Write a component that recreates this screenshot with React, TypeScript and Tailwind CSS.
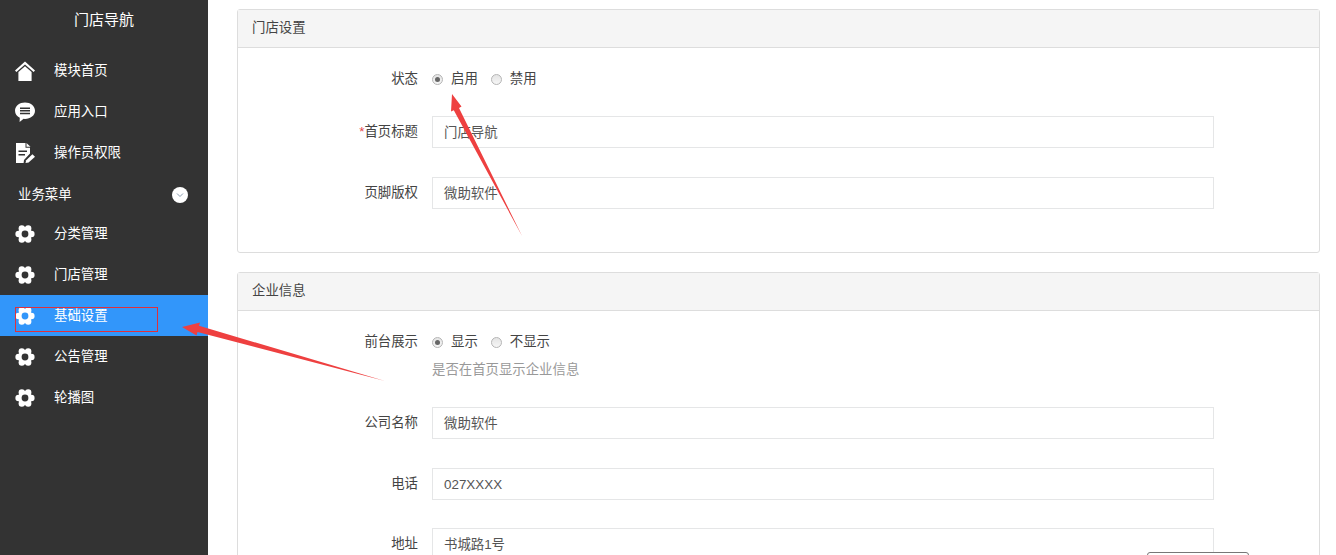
import type { ReactNode } from "react";

const FONT = "font-['Liberation_Sans','Noto_Sans_CJK_SC',sans-serif]";

function HomeIcon() {
  return (
    <svg viewBox="0 0 20 20" className="h-5 w-5 fill-white">
      <path d="M10 0.5 L20 9.5 L18.6 11 L10 3.4 L1.4 11 L0 9.5 Z" />
      <path d="M10 5.2 L16.6 11 V20 H3.4 V11 Z" />
    </svg>
  );
}

function ChatIcon() {
  return (
    <svg viewBox="0 0 20 20" className="h-5 w-5">
      <path
        className="fill-white"
        d="M10 0.5 C15.5 0.5 20 4 20 8.7 C20 13.4 15.5 16.9 10 16.9 L8.6 16.8 L4.6 20 L4.8 15.7 C2 14.3 0 11.8 0 8.7 C0 4 4.5 0.5 10 0.5 Z"
      />
      <path className="fill-[#333]" d="M5 5.4 H15 V6.9 H5 Z M5 8 H15 V9.5 H5 Z M5 10.7 H15 V12.2 H5 Z" />
    </svg>
  );
}

function DocIcon() {
  return (
    <svg viewBox="0 0 20 20" className="h-5 w-5">
      <path className="fill-white" d="M1 0 H10.5 V4.8 H15 V10.5 L9 17 L8.6 20 H1 Z" />
      <path className="fill-white" d="M11.5 0 L15.5 3.8 H11.5 Z" />
      <path className="fill-[#333]" d="M3.5 7.5 H12 V9 H3.5 Z M3.5 11 H10 V12.5 H3.5 Z" />
      <path className="fill-white" d="M10.5 20 L11.2 17.2 L17.4 11.2 L20 13.8 L13.6 19.4 Z" />
    </svg>
  );
}

function GearIcon({ hole = "#333" }: { hole?: string }) {
  return (
    <svg viewBox="0 0 20 20" className="h-5 w-5 fill-white">
      <circle cx="10" cy="10" r="7" />
      <circle cx="16.4" cy="10" r="3.2" />
      <circle cx="3.6" cy="10" r="3.2" />
      <circle cx="13.2" cy="4.5" r="3.2" />
      <circle cx="6.8" cy="4.5" r="3.2" />
      <circle cx="13.2" cy="15.5" r="3.2" />
      <circle cx="6.8" cy="15.5" r="3.2" />
      <circle cx="10" cy="10" r="3.4" style={{ fill: hole }} />
    </svg>
  );
}

function MenuItem({
  icon,
  label,
  active = false,
}: {
  icon: ReactNode;
  label: string;
  active?: boolean;
}) {
  return (
    <div className={`flex h-[41px] items-center pl-[15px] ${active ? "bg-[#3296fa]" : ""}`}>
      <span className="flex w-[39px] shrink-0">{icon}</span>
      <span className="pt-[2px] text-[13.4px] text-white">{label}</span>
    </div>
  );
}

function Sidebar() {
  return (
    <aside className="flex w-[208px] shrink-0 flex-col bg-[#333333]">
      <div className="flex h-[50px] justify-center pt-[9px] text-[15px] leading-[22px] text-white">门店导航</div>
      <MenuItem icon={<HomeIcon />} label="模块首页" />
      <MenuItem icon={<ChatIcon />} label="应用入口" />
      <MenuItem icon={<DocIcon />} label="操作员权限" />
      <div className="flex h-[40px] items-center justify-between pl-[18px] pr-[20px] pt-[4px]">
        <span className="text-[13.4px] text-white">业务菜单</span>
        <span className="flex h-4 w-4 items-center justify-center rounded-full bg-white">
          <svg viewBox="0 0 8 8" className="h-2 w-2 fill-none stroke-[#8a9bb0] stroke-1">
            <path d="M1 2.5 L4 5.5 L7 2.5" />
          </svg>
        </span>
      </div>
      <MenuItem icon={<GearIcon />} label="分类管理" />
      <MenuItem icon={<GearIcon />} label="门店管理" />
      <MenuItem icon={<GearIcon hole="#3296fa" />} label="基础设置" active />
      <MenuItem icon={<GearIcon />} label="公告管理" />
      <MenuItem icon={<GearIcon />} label="轮播图" />
    </aside>
  );
}

function Radio({ checked = false, label }: { checked?: boolean; label: string }) {
  return (
    <span className="flex items-center">
      <span className="flex h-[11px] w-[11px] items-center justify-center rounded-full border border-[#b5b5b5] bg-gradient-to-b from-[#e4e4e4] to-[#f6f6f6]">
        {checked && <span className="h-[5px] w-[5px] rounded-full bg-[#666]" />}
      </span>
      <span className="ml-[8px] pt-[1px] text-[13.4px] text-[#444]">{label}</span>
    </span>
  );
}

function Label({ children }: { children: ReactNode }) {
  return <div className="w-[180px] shrink-0 pt-[1px] text-right text-[13.4px] text-[#444]">{children}</div>;
}

function RadioRow({ label, options }: { label: string; options: [string, string] }) {
  return (
    <div className="flex h-5 items-center">
      <Label>{label}</Label>
      <div className="ml-[14px] flex gap-[13px]">
        <Radio checked label={options[0]} />
        <Radio label={options[1]} />
      </div>
    </div>
  );
}

function InputRow({ label, value, className = "" }: { label: ReactNode; value: string; className?: string }) {
  return (
    <div className={`flex items-center ${className}`}>
      <Label>{label}</Label>
      <div className="ml-[14px] flex h-[32px] w-[782px] shrink-0 items-center border border-[#e5e6e7] pl-[11px] pt-[2px] text-[13.4px] text-[#555]">
        {value}
      </div>
    </div>
  );
}

function Panel({ title, children, className = "" }: { title: string; children: ReactNode; className?: string }) {
  return (
    <section className={`shrink-0 rounded-[3px] border border-[#dddddd] bg-white ${className}`}>
      <div className="flex h-[38px] items-center border-b border-[#dddddd] bg-[#f5f5f5] pl-[14px] text-[13.4px] text-[#444]">
        {title}
      </div>
      {children}
    </section>
  );
}

function Annotations() {
  return (
    <svg className="pointer-events-none absolute left-0 top-0 h-[555px] w-[1336px]" viewBox="0 0 1336 555">
      <path className="fill-[#ee4040]" d="M522 236 L459 108 L461.5 106.5 L452 94 L451 111.5 L453.8 110.2 Z" />
      <path className="fill-[#ee4040]" d="M385 381 L199 325.8 L200 322.5 L182 327 L196.5 335.5 L197.5 332 Z" />
      <rect x="15.5" y="307.5" width="142" height="24" fill="none" stroke="#e0303a" strokeWidth="1" />
    </svg>
  );
}

export default function App() {
  return (
    <div className={`relative flex h-[555px] w-[1336px] overflow-hidden bg-white ${FONT}`}>
      <Sidebar />
      <main className="flex min-w-0 flex-1 flex-col gap-[19px] pl-[29px] pr-[16px] pt-[9px]">
        <Panel title="门店设置" className="h-[244px]">
          <div className="pt-[21px]">
            <RadioRow label="状态" options={["启用", "禁用"]} />
          </div>
          <InputRow
            className="mt-[27px]"
            label={
              <>
                <span className="text-[#e5484d]">*</span>首页标题
              </>
            }
            value="门店导航"
          />
          <InputRow className="mt-[29px]" label="页脚版权" value="微助软件" />
        </Panel>
        <Panel title="企业信息">
          <div className="pt-[21px]">
            <RadioRow label="前台展示" options={["显示", "不显示"]} />
          </div>
          <div className="ml-[194px] mt-[8px] h-5 text-[13.4px] leading-5 text-[#999]">是否在首页显示企业信息</div>
          <InputRow className="mt-[27px]" label="公司名称" value="微助软件" />
          <InputRow className="mt-[29px]" label="电话" value="027XXXX" />
          <InputRow className="mt-[28px]" label="地址" value="书城路1号" />
        </Panel>
      </main>
      <Annotations />
      <div className="absolute left-[1147px] top-[552px] h-[20px] w-[102px] rounded-[3px] border border-[#777] bg-white" />
    </div>
  );
}
